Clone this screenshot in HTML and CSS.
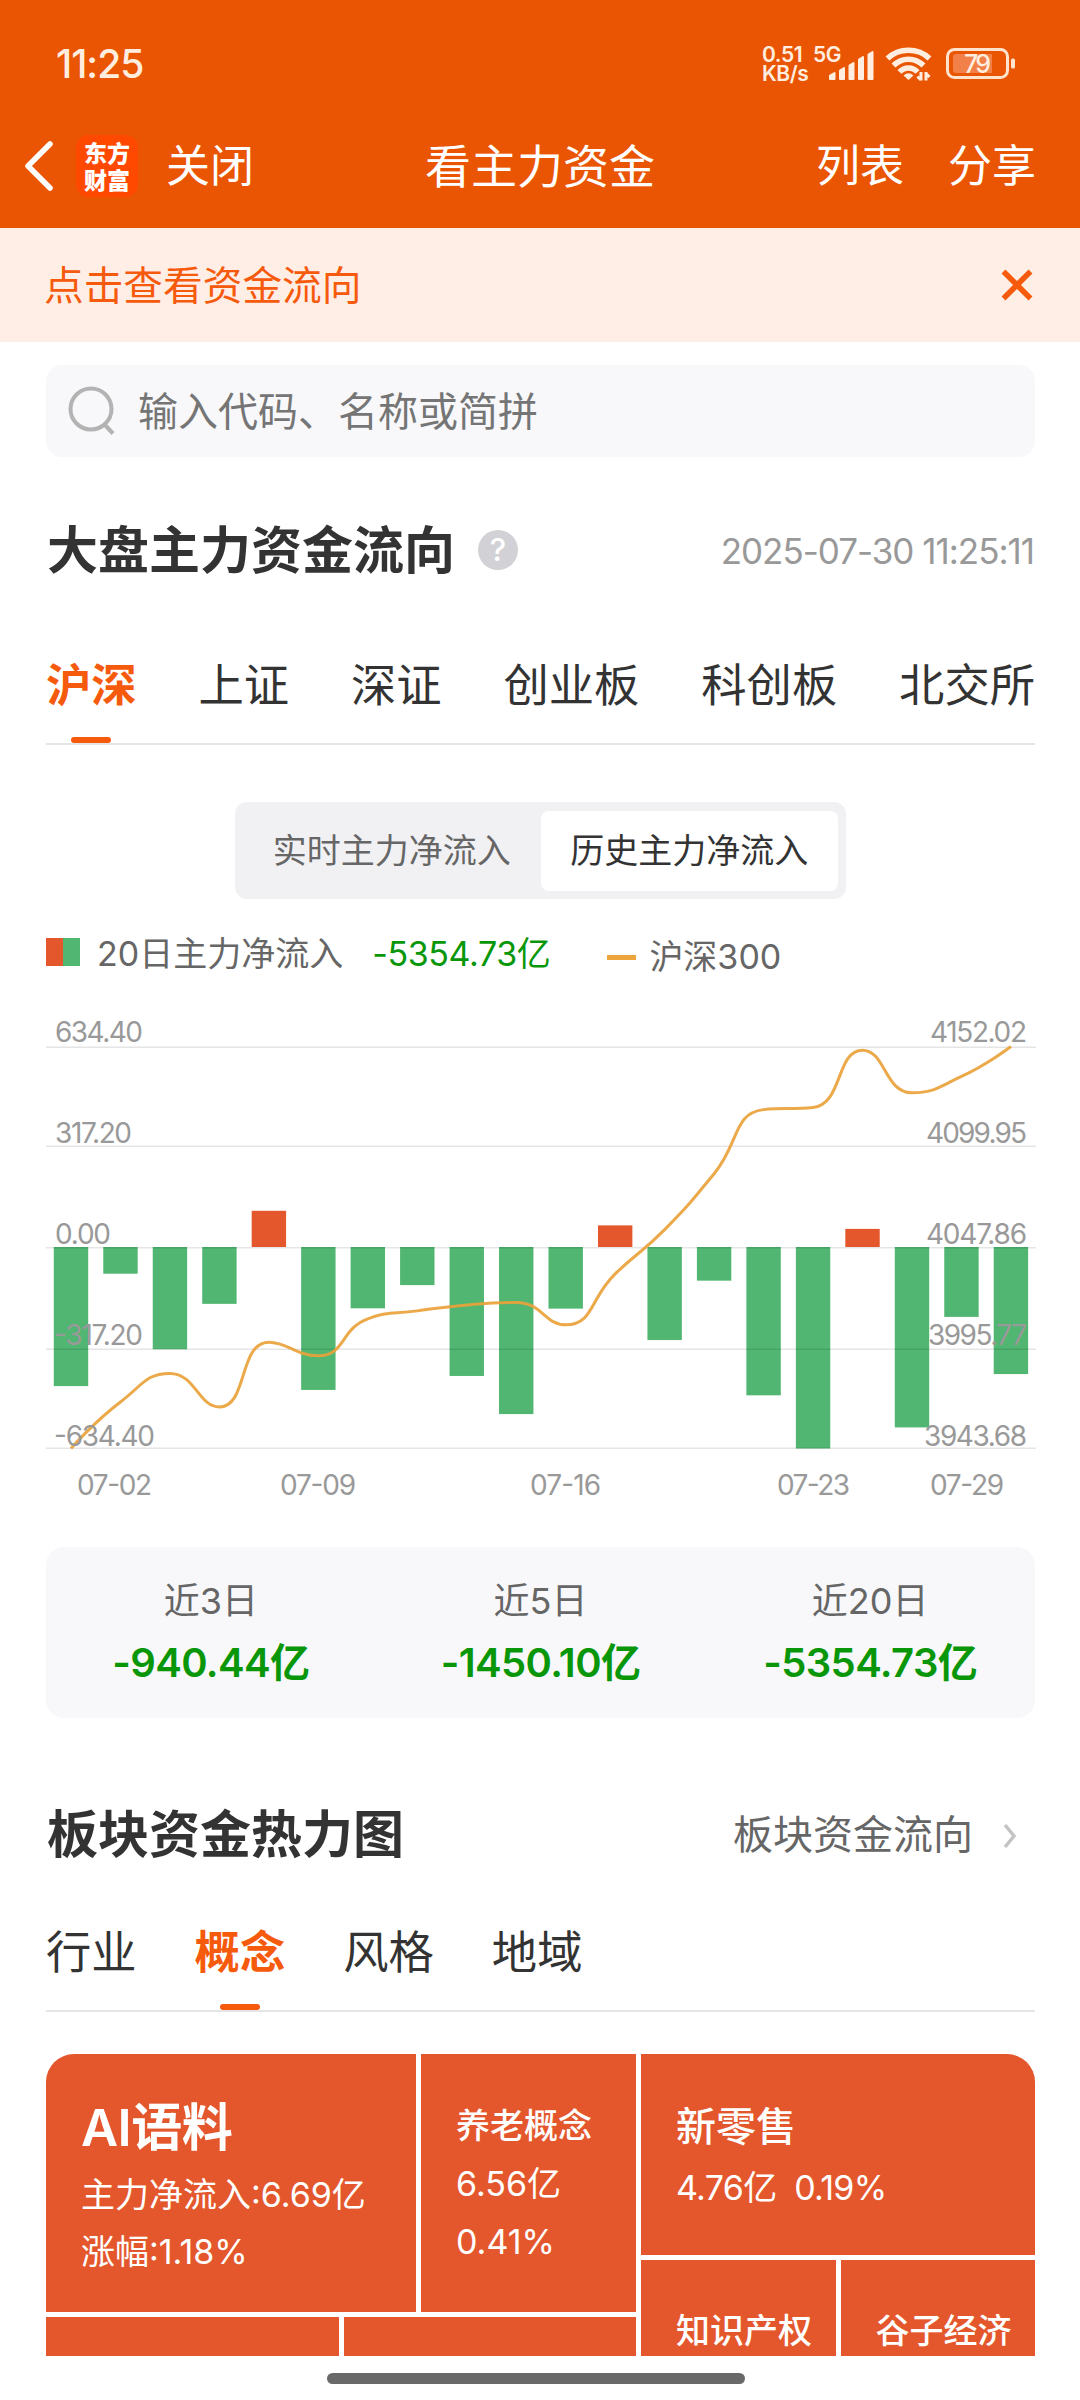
FILE: index.html
```html
<!DOCTYPE html>
<html lang="zh-CN">
<head>
    <meta charset="UTF-8">
    <meta name="viewport" content="width=device-width, initial-scale=1.0">
    <title>看主力资金</title>
    <link rel="stylesheet" href="styles.css">
</head>
<body>
    <header>
        <div class="status-bar">
            <span class="clock">11:25</span>
            <div class="status-icons">
                <div class="net-speed"><span>0.51</span><span>KB/s</span></div>
                <span class="net-type">5G</span>
                <svg class="signal" width="45" height="29" viewBox="0 0 45 29" fill="#ffeedf" stroke="#ffeedf" stroke-width="2" stroke-linejoin="round">
                    <path d="M1 24.500L5.500 22V28H1Z"/>
                    <path d="M11 19.500L15 17V28H11Z"/>
                    <path d="M20.500 14.500L24.500 12V28H20.500Z"/>
                    <path d="M30 8.500L34 6V28H30Z"/>
                    <path d="M39.500 3.500L43.500 1V28H39.500Z"/>
                </svg>
                <svg class="wifi" width="48" height="36" viewBox="0 0 48 36" fill="none" stroke="#ffeedf" stroke-width="5.500">
                    <path d="M2.500 12.500C14 1.500 33 1.500 44.500 12.500"/>
                    <path d="M8.500 19.500C17 11 30 11 38.500 19.500"/>
                    <path d="M14.500 26C19.500 20.500 27.500 20.500 32.500 26"/>
                    <path d="M23.500 34L18.500 29.500Q23.500 25 28.500 29.500Z" fill="#ffeedf" stroke="none"/>
                    <path d="M36 26V34.500M32.500 30.500L36 34M41 34.500V26M41 27.500L44.500 31" stroke-width="3"/>
                </svg>
                <svg class="battery" width="70" height="32" viewBox="0 0 70 32">
                    <rect x="1.500" y="1.500" width="60" height="28" rx="7" fill="none" stroke="#ffe3cc" stroke-width="3"/>
                    <path d="M10 6H46V25H10Q7 25 7 22V9Q7 6 10 6Z" fill="#f18148"/>
                    <rect x="65" y="10.500" width="4" height="10" rx="1.500" fill="#ffe3cc"/>
                    <text x="18" y="24.500" class="battery-text" textLength="27">79</text>
                </svg>
            </div>
        </div>
        <nav class="nav-bar">
            <div class="nav-side">
                <svg width="32" height="52" viewBox="0 0 32 52" fill="none" stroke="#fff" stroke-width="5.500" stroke-linecap="round" stroke-linejoin="round">
                    <path d="M27 4L5 26L27 48"/>
                </svg>
                <div class="logo"><span>东方</span><span>财富</span></div>
                <span class="nav-text">关闭</span>
            </div>
            <h1>看主力资金</h1>
            <div class="nav-side nav-right">
                <span class="nav-text">列表</span>
                <span class="nav-text">分享</span>
            </div>
        </nav>
    </header>

    <div class="notice">
        <span>点击查看资金流向</span>
        <svg width="32" height="32" viewBox="0 0 32 32" stroke="#f65a0c" stroke-width="5.500">
            <path d="M2.500 2.500L29.500 29.500M29.500 2.500L2.500 29.500"/>
        </svg>
    </div>

    <main>
        <div class="search">
            <svg width="48" height="50" viewBox="0 0 48 50" fill="none" stroke="#b3b3b3" stroke-width="4">
                <circle cx="23" cy="23" r="20.500"/>
                <path d="M36 38L45 47.500"/>
            </svg>
            <span>输入代码、名称或简拼</span>
        </div>

        <section class="title-row market-title">
            <h2>大盘主力资金流向</h2>
            <span class="help">?</span>
            <time>2025-07-30 11:25:11</time>
        </section>

        <ul class="tabs market-tabs">
            <li class="active">沪深</li>
            <li>上证</li>
            <li>深证</li>
            <li>创业板</li>
            <li>科创板</li>
            <li>北交所</li>
        </ul>

        <div class="switch">
            <span>实时主力净流入</span>
            <span class="on">历史主力净流入</span>
        </div>

        <div class="legend">
            <i class="legend-bars"></i>
            <span class="legend-name">20日主力净流入</span>
            <span class="legend-value">-5354.73亿</span>
            <i class="legend-line"></i>
            <span class="legend-index">沪深300</span>
        </div>

        <svg class="chart" id="flowChart" width="990" height="495" viewBox="0 0 990 495"></svg>

        <div class="summary">
            <div><p>近3日</p><strong>-940.44亿</strong></div>
            <div><p>近5日</p><strong>-1450.10亿</strong></div>
            <div><p>近20日</p><strong>-5354.73亿</strong></div>
        </div>

        <section class="title-row sector-title">
            <h2>板块资金热力图</h2>
            <a class="more"><span>板块资金流向</span>
                <svg width="14" height="26" viewBox="0 0 14 26" fill="none" stroke="#c4c4c4" stroke-width="3.500">
                    <path d="M2 2L11 13L2 24"/>
                </svg>
            </a>
        </section>

        <ul class="tabs sector-tabs">
            <li>行业</li>
            <li class="active">概念</li>
            <li>风格</li>
            <li>地域</li>
        </ul>

        <div class="heatmap">
            <div class="heat-left">
                <div class="heat-row heat-top">
                    <div class="cell cell-xl">
                        <h3>AI语料</h3>
                        <p>主力净流入:6.69亿</p>
                        <p>涨幅:1.18%</p>
                    </div>
                    <div class="cell cell-m">
                        <h3>养老概念</h3>
                        <p>6.56亿</p>
                        <p>0.41%</p>
                    </div>
                </div>
                <div class="heat-row heat-bottom">
                    <div class="cell"></div>
                    <div class="cell"></div>
                </div>
            </div>
            <div class="heat-right">
                <div class="cell cell-l">
                    <h3>新零售</h3>
                    <p>4.76亿&nbsp; 0.19%</p>
                </div>
                <div class="heat-row">
                    <div class="cell cell-s"><h3>知识产权</h3></div>
                    <div class="cell cell-s"><h3>谷子经济</h3></div>
                </div>
            </div>
        </div>
    </main>
    <div class="home-bar"></div>

    <script src="chart.js"></script>
</body>
</html>
```

FILE: styles.css
```css
* {
    box-sizing: border-box;
    margin: 0;
    padding: 0;
}
body {
    width: 1080px;
    height: 2400px;
    overflow: hidden;
    background: #fff;
    color: #333;
    font-family: Inter, "Noto Sans CJK SC", sans-serif;
}
header {
    height: 228px;
    background: #ea5504;
    color: #fff;
}
.status-bar {
    display: flex;
    justify-content: space-between;
    height: 104px;
    padding: 45px 64px 0 56px;
    color: #ffeedf;
}
.clock {
    font-size: 39px;
    line-height: 38px;
    font-weight: 500;
    letter-spacing: -1px;
}
.status-icons {
    display: flex;
    align-items: flex-start;
}
.net-speed {
    display: flex;
    flex-direction: column;
    width: 51px;
    font-size: 21px;
    font-weight: 600;
    line-height: 19px;
    letter-spacing: -0.4px;
}
.net-type {
    width: 16px;
    font-size: 21px;
    font-weight: 600;
    line-height: 19px;
    letter-spacing: -0.5px;
}
.signal {
    margin-top: 6px;
}
.wifi {
    margin: 1px 0 0 11px;
}
.battery {
    margin: 3px 0 0 13px;
}
.battery-text {
    fill: #ffeedf;
    font-size: 25px;
    font-weight: 500;
}
.nav-bar {
    display: flex;
    align-items: center;
    height: 124px;
    padding: 0 44px 0 23px;
    font-size: 44px;
}
.nav-bar h1 {
    padding-bottom: 6px;
    font-size: 46px;
    font-weight: 400;
}
.nav-side {
    display: flex;
    flex: 1 0 0;
    align-items: center;
}
.nav-text {
    padding-bottom: 6px;
}
.nav-right {
    flex-basis: -21px;
    justify-content: flex-end;
    gap: 44px;
}
.nav-bar .nav-right {
    flex: none;
    width: 381px;
}
.nav-side:first-child {
    flex: none;
    width: 402px;
}
.logo {
    display: flex;
    flex-direction: column;
    align-items: center;
    justify-content: center;
    width: 62px;
    height: 62px;
    margin: 0 28px 0 21px;
    border-radius: 13px;
    background: #ff4800;
    font-family: "Noto Sans CJK SC", sans-serif;
    font-size: 23px;
    font-weight: 900;
    line-height: 27px;
}
.notice {
    display: flex;
    align-items: center;
    justify-content: space-between;
    height: 114px;
    padding: 0 47px 0 44px;
    background: #ffeee6;
    color: #f65a0c;
    font-size: 39.7px;
}
.notice span,
.search span {
    padding-bottom: 5px;
}
main {
    padding: 23px 45px 0 46px;
}
.search {
    display: flex;
    align-items: center;
    height: 92px;
    padding-left: 22px;
    border-radius: 16px;
    background: #f8f8fb;
    color: #757575;
    font-size: 40px;
}
.search span {
    margin-left: 22px;
}
.title-row {
    display: flex;
    align-items: center;
    height: 76px;
}
.title-row h2 {
    padding: 2px 0 0 1px;
    font-size: 51px;
    font-weight: 700;
    line-height: 76px;
}
.market-title {
    margin-top: 55px;
}
.help {
    width: 40px;
    height: 40px;
    margin-left: 23px;
    border-radius: 50%;
    background: #d2d2d6;
    color: #fff;
    font-size: 31px;
    font-weight: 500;
    line-height: 40px;
    text-align: center;
}
.title-row time {
    margin-left: auto;
    padding: 1px 1px 0 0;
    color: #999;
    font-size: 35px;
    letter-spacing: -1px;
}
.tabs {
    display: flex;
    border-bottom: 2px solid #e5e5e5;
    font-size: 45.3px;
    list-style: none;
}
.tabs li {
    display: flex;
    flex-direction: column;
    align-items: center;
    padding-top: 2px;
    line-height: 66px;
}
.tabs .active {
    color: #f65a0c;
    font-weight: 700;
}
.tabs .active::after {
    content: "";
    width: 40px;
    height: 6px;
    margin-top: auto;
    border-radius: 3px;
    background: #f65a0c;
}
.market-tabs {
    justify-content: space-between;
    height: 94px;
    margin-top: 63px;
}
.sector-tabs {
    gap: 58px;
    height: 94px;
    margin-top: 46px;
}
.switch {
    display: flex;
    width: 611px;
    height: 97px;
    margin: 57px auto 0 189px;
    padding: 9px 8px 8px;
    border-radius: 12px;
    background: #f1f1f4;
    color: #666;
    font-size: 34px;
    line-height: 80px;
    text-align: center;
}
.switch span {
    flex: 1;
}
.switch .on {
    border-radius: 8px;
    background: #fff;
    color: #333;
}
.legend {
    display: flex;
    align-items: center;
    height: 60px;
    margin-top: 25px;
    color: #666;
    font-size: 34px;
}
.legend-bars {
    width: 34px;
    height: 28px;
    margin-bottom: 4px;
    background: linear-gradient(90deg, #e4572c 50%, #50b671 50%);
}
.legend-name {
    margin-left: 17px;
    padding-bottom: 5px;
}
.legend-value {
    margin-left: 29px;
    padding-bottom: 5px;
    color: #099609;
    letter-spacing: -0.4px;
}
.legend-line {
    width: 29px;
    height: 5px;
    margin: 7px 13px 0 57px;
    background: #eda43b;
}
.chart {
    display: block;
    margin-top: 31px;
}
.chart text {
    fill: #999;
    font-size: 28px;
}
.summary {
    display: grid;
    grid-template-columns: repeat(3, 1fr);
    height: 171px;
    margin-top: 37px;
    padding-top: 27px;
    border-radius: 18px;
    background: #f8f8fb;
    text-align: center;
}
.summary p {
    color: #666;
    font-size: 36px;
    line-height: 54px;
}
.summary strong {
    display: block;
    color: #099609;
    font-size: 40px;
    font-weight: 600;
    line-height: 70px;
    letter-spacing: -0.6px;
}
.sector-title {
    justify-content: space-between;
    margin-top: 78px;
}
.more {
    display: flex;
    align-items: center;
    padding-right: 18px;
    color: #666;
    font-size: 40px;
}
.more span {
    padding-bottom: 4px;
}
.more svg {
    margin: 4px 0 0 30px;
}
.heatmap {
    display: flex;
    gap: 5px;
    height: 302px;
    margin-top: 42px;
    overflow: hidden;
    border-radius: 28px 28px 0 0;
    color: #fff;
}
.heat-left,
.heat-right {
    display: flex;
    flex-direction: column;
    gap: 5px;
}
.heat-left {
    width: 590px;
}
.heat-right {
    flex: 1;
}
.heat-row {
    display: flex;
    flex: 1;
    gap: 5px;
    min-height: 0;
}
.heat-top {
    flex: none;
    height: 258px;
}
.heat-bottom .cell:first-child {
    width: 293px;
}
.heat-bottom .cell:last-child {
    flex: 1;
}
.cell {
    padding-left: 35px;
    background: #e4572c;
    font-size: 34px;
    line-height: 58px;
    white-space: nowrap;
}
.cell h3 {
    font-size: 34px;
    font-weight: 500;
}
.cell-xl {
    width: 370px;
    padding-top: 36px;
}
.cell-xl h3 {
    font-size: 51px;
    font-weight: 600;
    line-height: 76px;
    letter-spacing: -0.5px;
}
.cell-xl p {
    line-height: 57px;
}
.cell-m {
    flex: 1;
    padding-top: 43px;
}
.cell-l {
    flex: none;
    height: 201px;
    padding-top: 42px;
}
.cell-l h3 {
    font-size: 40px;
    line-height: 62px;
}
.cell-l p {
    line-height: 60px;
    letter-spacing: -0.7px;
}
.cell-s {
    flex: 1;
    padding-top: 42px;
}
.home-bar {
    width: 418px;
    height: 11px;
    margin: 17px auto 0 327px;
    border-radius: 6px;
    background: #696969;
}
```

FILE: chart.js
```js
const flows = [-438, -84, -322, -179, 114, -450, -193, -120, -406, -526,
    -194, 68, -293, -106, -467, -634.4, 57, -568, -220, -400];
const index = [3943.68, 3967.8, 3982.6, 3965.2, 3998.8, 3991.7, 4010.9, 4015, 4018.1, 4019.4,
    4007.8, 4034.2, 4057.1, 4086.1, 4119.3, 4120.4, 4150.1, 4128, 4136.5, 4152.02];

// [text, x, baseline, width]
const labels = [
    ['634.40', 9, 27, 88], ['317.20', 9, 128, 77], ['0.00', 9, 229, 56],
    ['-317.20', 8, 330, 89], ['-634.40', 8, 431, 101],
    ['4152.02', 884, 27, 97], ['4099.95', 880, 128, 101], ['4047.86', 880, 229, 101],
    ['3995.77', 882, 330, 99], ['3943.68', 878, 431, 103],
    ['07-02', 31, 480, 75], ['07-09', 234, 480, 76], ['07-16', 484, 480, 71],
    ['07-23', 731, 480, 73], ['07-29', 884, 480, 74]
];
const grid = [32, 131, 232.5, 334, 433];
const zero = 232;

const xAt = i => 25 + i * 49.47;
const clamp = (v, a, b) => Math.max(Math.min(a, b), Math.min(Math.max(a, b), v));

// smooth line whose control points never leave the box of their segment
function smoothPath(pts) {
    let d = 'M' + pts[0].x + ' ' + pts[0].y;
    let out = pts[0];
    for (let i = 1; i < pts.length; i++) {
        const prev = pts[i - 1], p = pts[i], next = pts[i + 1];
        let inn = p, nextOut = p;
        if (next) {
            const l0 = Math.hypot(p.x - prev.x, p.y - prev.y);
            const l1 = Math.hypot(next.x - p.x, next.y - p.y);
            const r = l1 / (l0 + l1);
            nextOut = {
                x: clamp(p.x + (next.x - prev.x) * 0.5 * r, p.x, next.x),
                y: clamp(p.y + (next.y - prev.y) * 0.5 * r, p.y, next.y)
            };
            inn = {
                x: clamp(p.x - (nextOut.x - p.x) * l0 / l1, prev.x, p.x),
                y: clamp(p.y - (nextOut.y - p.y) * l0 / l1, prev.y, p.y)
            };
            nextOut = {
                x: p.x + (p.x - inn.x) * l1 / l0,
                y: p.y + (p.y - inn.y) * l1 / l0
            };
        }
        d += ` C${out.x} ${out.y} ${inn.x} ${inn.y} ${p.x} ${p.y}`;
        out = nextOut;
    }
    return d;
}

let html = '';
flows.forEach((v, i) => {
    const h = Math.abs(v) / 634.4 * 201.5;
    const y = v > 0 ? zero - h : zero;
    html += `<rect x="${xAt(i) - 17.2}" y="${y}" width="34.4" height="${h}" fill="${v > 0 ? '#e4572c' : '#50b671'}"/>`;
});
grid.forEach(y => {
    html += `<rect x="0" y="${y - 0.5}" width="990" height="1.5" fill="rgba(0,0,0,0.1)"/>`;
});
const pts = index.map((v, i) => ({ x: xAt(i), y: 433.5 - (v - 3943.68) / 208.34 * 402 }));
html += `<path d="${smoothPath(pts)}" fill="none" stroke="#e9a23b" stroke-opacity="0.92" stroke-width="3"/>`;
labels.forEach(([text, x, y, w]) => {
    html += `<text x="${x}" y="${y}" textLength="${w}">${text}</text>`;
});
document.getElementById('flowChart').innerHTML = html;
```
